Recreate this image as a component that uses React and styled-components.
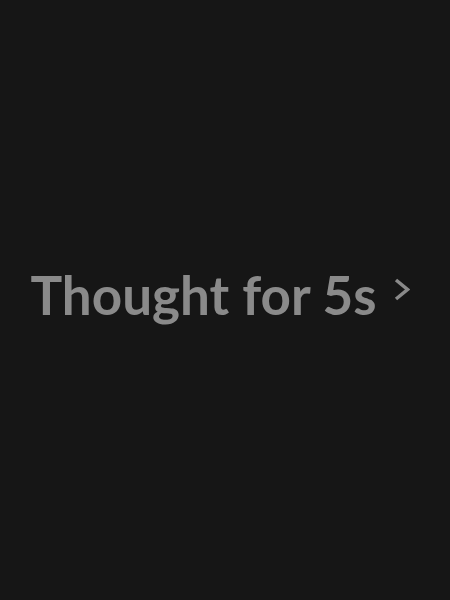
import React from 'react';
import styled, {createGlobalStyle} from 'styled-components';

const GlobalStyle = createGlobalStyle`
    html, body {
        margin: 0;
        padding: 0;
        background: #161616;
    }
`;

const Page = styled.div`
    width: 450px;
    height: 600px;
    display: flex;
    align-items: center;
    justify-content: center;
    background: #161616;
`;

const Row = styled.div`
    display: flex;
    align-items: center;
    gap: 18px;
    margin-top: -12px;
    margin-right: 9px;
    color: #8a8a8a;
`;

const Label = styled.span`
    font-family: Lato, "Open Sans", sans-serif;
    font-size: 53px;
    font-weight: 700;
    white-space: nowrap;
`;

const Chevron = styled.svg`
    width: 16px;
    height: 23px;
    margin-top: -9px;
`;

export default function App() {
    return (
        <Page>
            <GlobalStyle/>
            <Row>
                <Label>Thought for 5s</Label>
                <Chevron viewBox="0 0 16 23" fill="none">
                    <path d="M2 2 L13.5 11.5 L2 21" stroke="#8a8a8a" strokeWidth="3.5"/>
                </Chevron>
            </Row>
        </Page>
    );
}
